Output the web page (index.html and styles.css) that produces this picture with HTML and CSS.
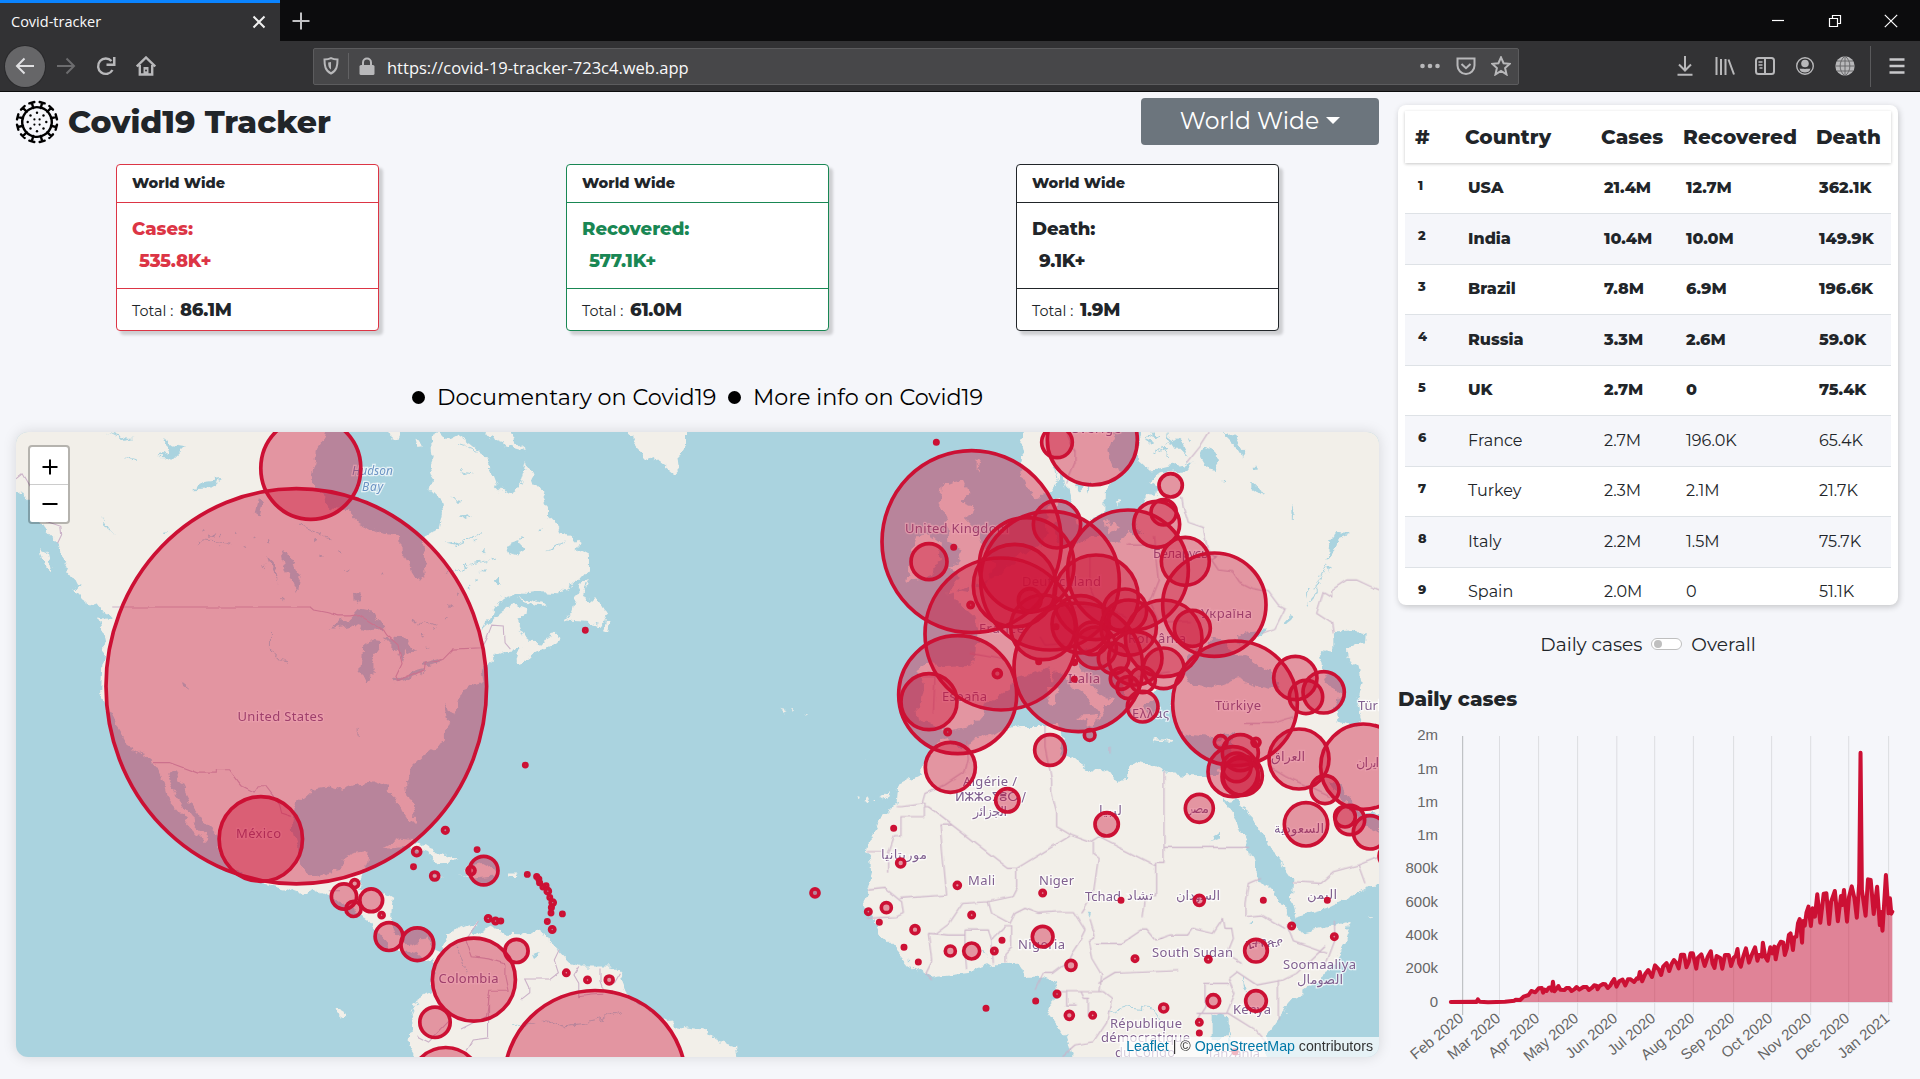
FILE: index.html
```html
<!DOCTYPE html>
<html lang="en">
<head>
<meta charset="utf-8">
<title>Covid-tracker</title>
<link rel="stylesheet" href="styles.css">
</head>
<body>
<div class="browser">
  <div class="tabstrip">
    <div class="tab"><span class="tab-title">Covid-tracker</span>
      <svg class="tab-close" viewBox="0 0 14 14"><path d="M1.5 1.5l11 11M12.5 1.5l-11 11"/></svg></div>
    <svg class="tab-new" viewBox="0 0 18 18"><path d="M9 0.500v17M.5 9h17"/></svg>
    <div class="winctl">
      <svg viewBox="0 0 14 14"><path d="M1 6.500h12"/></svg>
      <svg viewBox="0 0 14 14"><path d="M1.500 4.500h8v8h-8zM4.500 4.500v-3h8v8h-3"/></svg>
      <svg viewBox="0 0 14 14"><path d="M.8.8l12.400 12.400M13.200.8L.8 13.200"/></svg>
    </div>
  </div>
  <div class="toolbar">
    <div class="nav">
      <span class="back"><svg viewBox="0 0 20 20"><path d="M19 10H2M9.500 2.500L2 10l7.500 7.500"/></svg></span>
      <svg class="dim" viewBox="0 0 20 20"><path d="M1 10h17M10.500 2.500L18 10l-7.500 7.500"/></svg>
      <svg class="bold" viewBox="0 0 20 20"><path d="M16.500 14A7.700 7.700 0 1 1 15.500 5"/><path class="solid" d="M19.500 1v9h-9v-2.500h6.500V1z"/></svg>
      <svg class="bold" viewBox="0 0 20 20"><path d="M.8 10.500L10 1.500l9.200 9M3.800 9v9.500h12.400V9"/><path class="solid" d="M7.500 11h5v8h-5z"/><circle class="hole" cx="10" cy="14.500" r="1"/></svg>
    </div>
    <div class="urlbar">
      <svg class="shield" viewBox="0 0 16 18"><path d="M8 1.200c2 1 4 1.300 6.500 1.300 0 6-.5 11-6.500 14C2 13.500 1.500 8.500 1.500 2.500 4 2.500 6 2.200 8 1.200z"/><path d="M8 5v7.500C5.500 11 5.200 9 5.200 5.600z" class="solid"/></svg>
      <i class="bar-sep"></i>
      <svg class="lock" viewBox="0 0 16 18"><path d="M4 9V5.500a4 4 0 0 1 8 0V9"/><rect class="solid" x="0.500" y="8" width="15" height="10" rx="1.500"/></svg>
      <span class="url">https://covid-19-tracker-723c4.web.app</span>
      <div class="url-actions">
        <svg viewBox="0 0 20 20"><circle class="solid" cx="2.500" cy="10" r="2.300"/><circle class="solid" cx="10" cy="10" r="2.300"/><circle class="solid" cx="17.500" cy="10" r="2.300"/></svg>
        <svg viewBox="0 0 20 20"><path d="M1.500 2.500h17v7a8.500 8.500 0 0 1-17 0z"/><path d="M5.500 8l4.500 4.200L14.500 8"/></svg>
        <svg viewBox="0 0 20 20"><path d="M10 1.300l2.600 5.900 6.200.6-4.700 4.200 1.400 6.400L10 15l-5.500 3.400L5.900 12 1.200 7.800l6.200-.6z"/></svg>
      </div>
    </div>
    <div class="tools">
      <svg viewBox="0 0 20 20"><path d="M10 0v13.500M4 8.500l6 6 6-6M2.500 18.800h15"/></svg>
      <svg viewBox="0 0 20 20"><path d="M1.500 1v18M6 3v16M10.500 3v16M13.500 3.500L19 18.500"/></svg>
      <svg viewBox="0 0 20 20"><rect x="1" y="2" width="18" height="16" rx="2.500"/><path d="M10 2v16" /><path class="thin" d="M3.500 6h4M3.500 9h4M4.500 12h3"/></svg>
      <svg viewBox="0 0 20 20"><circle class="thin" cx="10" cy="10" r="8.300"/><circle class="solid" cx="10" cy="7.500" r="3.800"/><path class="solid" d="M4.500 12.500c2 .5 9 .5 11 0-.6 3-3 4-5.500 4s-5-1-5.500-4z"/></svg>
      <svg viewBox="0 0 20 20"><circle class="solid" cx="10" cy="10" r="9.700"/><path class="grid-line" d="M10 0v20M0 10h20M2 5h16M2 15h16M10 0C3.500 5 3.500 15 10 20M10 0c6.500 5 6.500 15 0 20"/></svg>
    </div>
    <i class="tool-sep"></i>
    <svg class="menu" viewBox="0 0 16 18"><path d="M.5 2.500h15M.5 9h15M.5 15.500h15"/></svg>
  </div>
</div>

<main class="app">
  <section class="left">
    <header class="head">
      <svg class="virus" viewBox="-22 -22 44 44">
        <g fill="none" stroke="#000" stroke-width="2.400" transform="rotate(15)">
          <circle r="14.800"/>
          <g id="spikes"><path id="sp" d="M0-14.500v-5.500M-2.600-20h5.200" stroke-linecap="round"/><use href="#sp" transform="rotate(30)"/><use href="#sp" transform="rotate(60)"/></g>
          <use href="#spikes" transform="rotate(90)"/><use href="#spikes" transform="rotate(180)"/><use href="#spikes" transform="rotate(270)"/>
        </g>
        <g fill="#000"><circle cx="0" cy="-9.300" r="1.200"/><circle cx="0" cy="9.300" r="1.200"/><circle cx="-9.300" cy="0" r="1.200"/><circle cx="9.300" cy="0" r="1.200"/><circle cx="-6.500" cy="-6.500" r="1.200"/><circle cx="6.500" cy="-6.500" r="1.200"/><circle cx="-6.500" cy="6.500" r="1.200"/><circle cx="6.500" cy="6.500" r="1.200"/><circle cx="-2.600" cy="-2.600" r="1.100"/><circle cx="2.600" cy="-2.600" r="1.100"/><circle cx="-2.600" cy="2.600" r="1.100"/><circle cx="2.600" cy="2.600" r="1.100"/></g>
      </svg>
      <h1>Covid19 Tracker</h1>
      <button class="dropdown"><span>World Wide</span><i class="caret"></i></button>
    </header>

    <div class="cards">
      <article class="card red"><h2>World Wide</h2><div class="card-body"><p>Cases:</p><p class="num">535.8K+</p></div><footer>Total : <b>86.1M</b></footer></article>
      <article class="card green"><h2>World Wide</h2><div class="card-body"><p>Recovered:</p><p class="num">577.1K+</p></div><footer>Total : <b>61.0M</b></footer></article>
      <article class="card dark"><h2>World Wide</h2><div class="card-body"><p>Death:</p><p class="num">9.1K+</p></div><footer>Total : <b>1.9M</b></footer></article>
    </div>

    <nav class="links"><i class="dot"></i><a class="l1">Documentary on Covid19</a><i class="dot"></i><a class="l2">More info on Covid19</a></nav>

    <div class="map">
      <svg class="world" viewBox="16 432 1363 625">
        <defs>
          <filter id="coast" filterUnits="userSpaceOnUse" x="0" y="400" width="1400" height="680"><feTurbulence type="fractalNoise" baseFrequency=".09" numOctaves="4" seed="4"/><feDisplacementMap in="SourceGraphic" scale="11" xChannelSelector="R" yChannelSelector="G"/></filter>
          <filter id="frontier" filterUnits="userSpaceOnUse" x="0" y="400" width="1400" height="680"><feTurbulence type="fractalNoise" baseFrequency=".06" numOctaves="2" seed="9"/><feDisplacementMap in="SourceGraphic" scale="4" xChannelSelector="R" yChannelSelector="G"/></filter>
        </defs>
        <g filter="url(#coast)">
        <g class="land" transform="translate(0 420) scale(.40816 .42034)">
          <path d="M20 0H805L790 45 775 70 765 120 770 160 800 190 805 210 850 215 880 245 930 268 980 278 982 310 1003 345 1012 372 1025 385 1045 360 1040 315 1035 290 1045 275 1075 255 1083 220 1075 190 1050 165 1060 130 1052 110 1060 90 1055 40 1075 32 1100 45 1120 35 1150 55 1175 75 1200 90 1198 115 1205 130 1215 155 1230 170 1245 178 1262 168 1272 155 1280 130 1288 100 1300 125 1310 150 1322 160 1330 180 1345 210 1345 230 1362 245 1380 270 1400 278 1420 295 1415 305 1443 320 1443 355 1420 380 1400 395 1375 412 1330 410 1300 414 1250 412 1230 425 1215 440 1195 475 1182 500 1200 485 1220 462 1245 446 1270 440 1292 448 1290 462 1265 475 1275 498 1282 515 1300 530 1330 532 1350 505 1360 503 1360 515 1371 520 1350 540 1320 550 1300 560 1275 578 1263 570 1268 555 1285 545 1270 545 1240 548 1215 558 1192 575 1185 600 1190 625 1155 635 1130 645 1125 670 1112 705 1088 670 1098 715 1090 735 1090 765 1050 790 1025 810 1005 830 997 860 1000 890 1018 930 1016 955 1002 955 985 930 970 895 945 872 905 858 870 862 850 870 840 882 800 872 765 878 720 915 715 980 735 1040 740 1065 770 1085 820 1072 838 1060 845 1040 870 1030 903 1025 900 1050 885 1085 875 1118 900 1115 935 1122 965 1140 962 1165 960 1200 975 1235 1000 1250 1030 1240 1050 1238 1062 1255 1080 1262 1100 1220 1130 1207 1172 1190 1155 1212 1165 1225 1200 1205 1240 1222 1290 1224 1320 1215 1345 1230 1342 1240 1370 1260 1400 1290 1430 1300 1500 1300 1520 1320 1530 1345 1540 1380 1633 1425 1650 1440 1723 1450 1764 1480 1801 1490 1808 1550H1040L1003 1490 1005 1460 1015 1440 1005 1410 1020 1380 1055 1360 1065 1320 1062 1280 1040 1285 1020 1270 985 1262 960 1265 945 1240 930 1225 900 1190 860 1160 820 1140 770 1118 740 1130 700 1115 640 1100 590 1080 560 1062 540 1030 535 990 500 960 460 900 440 862 430 838 415 838 418 860 440 905 480 960 508 990 500 1000 470 970 430 925 412 905 400 860 375 815 350 795 315 775 285 725 268 690 248 650 250 590 258 540 250 500 243 465 275 470 250 448 215 430 190 395 180 375 150 330 140 290 115 265 95 240 80 200 60 180 39 165 20 140Z"/>
          <path d="M180 400L215 405 245 430 275 462 240 448 205 425ZM98 305L120 315 132 362 105 335ZM1445 380L1425 390 1410 420 1400 455 1385 477 1440 480 1465 485 1460 492 1485 478 1480 498 1492 502 1497 480 1485 478 1480 462 1488 455 1475 435 1440 430 1430 415ZM1265 423l35 5 40 12-20 4zM940 1018L975 998 1020 1003 1050 1022 1090 1035 1122 1050 1072 1052 1050 1030 1000 1012ZM1118 1080l32 6-6-28 35-5 35 18 8 14-60 6zM1246 1081h24l2 6h-26zM1050 1085l25-1 12 5-15 4zM1175 14h70l20 40 25 18-30-8-40-14-25-10zM950 18h35l-10 24-20 5zM1015 40l15 5 0 22-10-8zM820 1398l12 4 14 8-8 10-16-10z"/>
        </g>
        <g class="water" transform="translate(0 420) scale(.40816 .42034)">
          <path d="M690 310L715 325 722 355 735 380 730 410 718 380 700 355ZM810 500L835 480 855 475 880 448 915 455 925 475 942 497 900 500 860 488ZM890 535L915 525 935 528 912 560 913 610 895 622 885 600ZM940 515L990 520 1003 540 1022 553 1005 555 990 548 985 575 975 550 960 535ZM965 620L1010 600 1042 592 1030 605 975 626ZM1035 578L1085 566 1075 580 1040 586ZM385 88L415 78 400 42 425 60 455 65 430 90ZM470 165L500 145 545 140 505 163ZM265 30l40 12 25 0-30 5zM245 225l20 30 20 20-25-20zM395 265l20 0-15 5zM305 88l30 8 0 5zM632 190l12 8-8 32-12-8zM445 622l16 12 2 10-12-8zM867 412h14v20h-12zM655 325l15 15 12 45-15-25zM1240 300l30-10 10 15-15 20-15-5zM1110 185l25 5-15 2zM1120 230l35-5-25 10zM1210 375l12-2 2 14-10 2zM1385 285l-45 25 20-5zM1090 292l45-4-20 8zM1305 1270l20-5-5 18-10-2z"/>
          <path d="M495 260l8 4-6 4zM515 275l10-3-4 8zM540 270l6 6-8 2zM560 290l8 2-6 5zM580 262l5 6-7 1zM535 300l6 2-5 4zM600 300l6-3 0 6zM625 275l8 3-6 4zM655 290l6-4 2 8zM645 340l8 3-6 5zM690 420l8 5-6 4zM765 285l12 3-8 5zM785 320l8 4-8 3zM830 318l8-3-2 8zM850 355l10-2-6 7zM930 360l8 3-8 4zM1010 480l12-4-6 8zM1030 510l10-5-6 9zM1060 495l8 3-8 4zM1045 540l10-2-6 5zM1100 440l8-3-4 8zM1090 470l8 3-8 4zM1160 290l10-3-6 7zM1185 310l8-3-2 8zM1200 330l10 2-6 4zM1165 380l6 4-6 4zM1275 280l8 6-8 4zM1180 355l8-3-4 7zM1320 255l8 3-8 3zM1145 400l6-6 2 8zM1120 415l6 3-6 3z"/>
          <path class="river" d="M665 505v40l32 42M480 300l20-15 60 5M880 730v20M1020 490l20-12 25 10M730 250l80 30M1115 300l70-30M1150 345l70-12M1130 120l30 6M1125 60l40 12M1095 370l50-25M1330 1430l50 12 80-10 60-24M1120 1250l20 60M1250 1440l60 0"/>
        </g>
        <g class="land" transform="translate(400 420) scale(.33333 .42034)">
          <path d="M685 10L700 55 735 97 760 90 800 112 825 128 842 112 838 80 858 60 858 10ZM1145 688l15 2-10 4zM1170 686l12 0-8 3zM1206 706l16 2-8 2zM1390 811h12l-4 4zM1372 890l8 2-4 10zM1398 900l12 2-8 8zM1420 904h10l-6 5zM1450 902l20-20-6 18z"/>
        </g>
        <g transform="translate(860 420) scale(.33333)">
          <g class="land">
            <path d="M497 10L482 80 492 120 480 160 500 210 530 235 570 215 600 170 612 160 620 200 635 250 650 310 690 315 700 290 733 275 735 200 778 175 790 150 755 130 745 90 775 10Z"/>
            <path d="M845 10L832 70 835 120 865 148 900 146 970 130 1000 135 975 150 900 160 868 185 895 205 890 230 860 228 848 245 850 270 830 290 840 320 852 345 800 345 780 372 740 355 700 345 650 372 605 375 585 340 590 270 612 235 590 235 555 270 560 340 540 380 480 400 440 450 400 475 360 505 330 490 330 520 280 512 285 540 340 590 352 640 350 700 338 737 250 742 210 728 183 738 175 760 192 800 175 870 182 902 230 918 260 937 335 918 370 880 380 850 430 820 460 795 465 770 520 755 570 742 600 755 640 800 690 840 720 878 703 905 715 903 735 868 728 852 762 852 765 845 700 805 670 760 650 710 655 685 690 680 700 700 745 745 795 790 800 850 825 900 850 905 860 870 845 855 880 845 880 815 945 800 935 850 947 905 965 940 1000 945 1070 955 1100 935 1130 940 1115 985 1095 1020 1075 1065 1040 1065 985 1066 915 1057 880 1035 830 1020 805 1040 800 1080 780 1082 740 1055 690 1050 650 1025 620 1012 600 1000 612 950 600 915 540 915 480 915 400 940 340 965 305 985 255 955 235 975 190 1030 185 1060 115 1095 110 1150 60 1200 25 1270 20 1290 32 1310 38 1370 10 1450 40 1500 60 1540 100 1580 160 1650 215 1670 330 1655 400 1630 470 1628 500 1670 545 1670 580 1680 592 1720 567 1780 620 1850 650 1945H1215L1225 1840 1260 1790 1320 1720 1400 1660 1450 1580 1470 1508 1330 1540 1295 1500 1250 1430 1200 1380 1165 1280 1130 1195 1090 1130 1112 1145 1135 1140 1190 1220 1250 1310 1300 1380 1295 1440 1310 1490 1400 1465 1480 1425 1520 1400 1600 1392V10Z"/>
            <path d="M250 190L310 178 325 215 300 245 340 260 318 300 360 345 380 410 402 440 388 480 330 500 262 520 300 470 268 450 305 420 300 380 268 365 265 310 240 260ZM170 350L205 340 240 365 236 420 215 470 142 485 150 420ZM648 888l58-5-8 35zM565 795l25 0-6 56-18 4zM572 742l10 4-2 36-8-6zM880 953l20 5 38 2-5 6-50-5zM1058 968l45-15-20 22zM735 310l30-5 5 25-30 10zM350 122l10 0-10 34zM772 240l14 4-14 22zM10 1140l20-8-10 14zM55 1128l20-12 15 0-20 20zM1520 1495h16l-8 3z"/>
          </g>
          <g class="water">
            <path d="M985 700L972 760 985 785 1060 800 1130 775 1180 798 1235 806 1260 800 1240 765 1200 740 1150 705 1110 695 1095 660 1060 655 1035 690ZM1120 655L1160 635 1215 628 1200 650 1150 672ZM1420 655L1445 630 1480 627 1517 638 1515 670 1458 680 1460 715 1495 735 1505 790 1490 850 1510 900 1480 915 1430 905 1422 870 1440 830 1400 780 1378 700 1395 685 1420 690ZM1400 1080L1440 1090 1480 1155 1500 1180 1560 1185V1235L1500 1200 1430 1120ZM1035 80L1060 90 1080 120 1070 150 1040 145 1020 110ZM1100 36l30 20 25 50-15 5-25-40-20-20zM1175 140h15v12h-14zM1168 180l40 40-5 8-35-25zM1090 185h8v10zM920 36l40 30 20 45-30-30zM1405 370l25-35 40 5-35 15-10 30-25 30zM1405 440h10l-5 20zM1275 605l20-20 5 10-20 15zM1295 260l10 20-5 10zM1338 500l5 0-4 40zM1058 1780l45 15 0 35-20 30-25 0zM1145 1665l10 30 8 20-14-10zM1040 1285l15-30 25-20 0 20-30 10zM375 1590l8 20-15-15zM680 1475h10l-3 12zM1165 1505l12-4-2 12zM1100 1820l20 60-10 5zM860 60l20 8-10 10zM900 80l25 10-15 8zM880 40l20 5-12 8zM990 50l12 15-8 4zM650 180l15 10-5 25-10-15zM680 190l10 5-4 20z"/>
            <path class="river" d="M880 100l60-40M1345 560l60-130M1300 260v40M740 1780l60-20 80 10 20 30M600 200l-20-60M1120 60l-30-30M860 60l40-20M890 90l40 20"/>
          </g>
        </g>
        </g>
        <g filter="url(#frontier)">
        <g class="border" transform="translate(0 420) scale(.40816 .42034)">
          <path d="M275 445H760L768 452 800 458 830 466 858 466 878 463 940 500 948 512 975 535 985 580 970 610 975 620 1040 592 1042 576 1085 570 1110 545 1180 542 1192 520 1205 488 1233 490 1235 530 1248 545M375 815H415L485 840H530V832H560L590 870 620 885 630 870H650L685 915 690 935 715 943M39 140l15-12 30 50 20 60 45 15 2 20-10 20M808 1120h25M1172 1192l-30 45 15 40 40 5 40 12v30l8 35-45 0-8 60-60 30M1370 1260l-12 25 10 30-20 15-60 0 10 20 0 15-20 15M1418 1300l-12 20 12 20 0 32 30-4 30-2M1470 1305l0 30 10 25M1505 1340l15-25M1197 1370l0 100-40 5-15 25M1020 1465l30 15 50-50"/>
        </g>
        <g class="border" transform="translate(860 420) scale(.33333)">
            <path d="M1048 36L1020 80 980 130M645 90l0 40-25 60M620 36l25 60M965 230l5 30 15 50 45 15 12 60 25 30M800 375l80 0M880 345l5 45 10 90-20 50-20 30M1040 400l30 10-15 10 20 30 40 5 20 30 40 20 50 10 30 40 20 10-30 60-40 15M1420 640l-5-30-45-30 20-65 25 15 0-20 45-30h30l65 30M750 1000l0-20M555 920l0 60 20 100 0 40 15 60 0 40 45 26 55 20 25-15 170 85M185 1155l10-35 60-25 60-40 10-40-5-50M205 1160L445 1345 470 1345 630 1248M205 1160h-10v-10l-70 10-15 0M193 1160v30h-70v60h-20l-20 60v45M20 1295h45M275 1215h-35l20 210-140 10M470 1345l0 55-15 30-70 15-80 5-40 60-40 30M25 1410l50-5 50 40 5 35-20 10-90 5M912 1055v227M912 1282h255M912 1282v45h-25v100h-30l-8 65M700 1265l0 40 15 10-15 105-25 45-10 15M385 1445l10 35 55 30 15-30 30-15 40 15 60-5 45 0 35 55-20 40-20 30-15 30-40 30-30 0-25 50M315 1530l70 0 10 30 5 70M315 1530v60l5 60M205 1540l60 5 50 0M205 1540l10 80-20 40 20 20M395 1560l40-40 20 0 0 60-20 20v30M690 1500l15 50-20 15 10 50 30 50-5 50M705 1570l80 0 60-40 15 0 25 30 45-15 50 0 15-20 65 15 30-45 5 30 20 0 5 30-20 50 45 25M715 1690l50-30 190-8M1105 1675l25-20 60 40 80-15 40-20 85-80M1105 1675l20 45-25 60M1255 1800l0-120M1395 1640l30-80-2-55M1400 1600l-100-35-20-50M1200 1375l-35 15-10 60 0 40 50-5 70 40M590 1715h140l25 20-15 70-40 60-55 10-40 35M620 1715v40l30 0M660 1715l10 20 15 0 0 55M1010 1800l25-40 0-70 70 0M1010 1780h95l80 50 45 50M1300 1385l80 5 40-35 75-20 65-25M1495 1335l20 55M1230 1040l50 30 130 60M1150 910l90 0 60-20M440 720l-110-20M185 770h40l-5 110M540 650l15 25 60-5M690 410v90l25 50M640 560l90 0 70 30M870 545l30 60 90 0M830 770l100-15"/>
        </g>
        </g>
        <g class="label">
          <text x="352" y="475" textLength="41" class="sea">Hudson</text><text x="362" y="490.500" textLength="21" class="sea">Bay</text>
          <text x="237.500" y="721" textLength="86">United States</text>
          <text x="236" y="838" textLength="45">México</text>
          <text x="438.500" y="982.500" textLength="60">Colombia</text>
          <text x="905" y="532.500" textLength="104">United Kingdom</text>
          <text x="1072" y="432.500" textLength="49">Sverige</text>
          <text x="1022" y="586" textLength="79">Deutschland</text>
          <text x="979" y="633" textLength="45">France</text>
          <text x="942" y="701" textLength="45">España</text>
          <text x="1068" y="683" textLength="32">Italia</text>
          <text x="1132" y="718" textLength="37">Ελλάς</text>
          <text x="1153" y="557.500" textLength="55">Беларусь</text>
          <text x="1201" y="617.500" textLength="51">Україна</text>
          <text x="1128" y="643" textLength="58">România</text>
          <text x="1215" y="710" textLength="46">Türkiye</text>
          <text x="1358" y="710">Türkmenistan</text>
          <text x="963" y="785.500" textLength="54">Algérie /</text>
          <text x="955" y="801" textLength="71" class="tif">ⵍⵣⵣⴰⵢⴻⵔ /</text>
          <text x="973" y="816" textLength="34">الجزائر</text>
          <text x="1099" y="815" textLength="23">ليبيا</text>
          <text x="1187" y="813" textLength="22">مصر</text>
          <text x="1274" y="833" textLength="50">السعودية</text>
          <text x="1271" y="761" textLength="34">العراق</text>
          <text x="1356" y="767" textLength="23">ایران</text>
          <text x="881" y="859" textLength="46">موريتانيا</text>
          <text x="968" y="884.500" textLength="27">Mali</text>
          <text x="1039" y="885" textLength="35">Niger</text>
          <text x="1085" y="900.500" textLength="36">Tchad</text><text x="1127" y="900" textLength="26">تشاد</text>
          <text x="1176" y="900" textLength="44">السودان</text>
          <text x="1307" y="899" textLength="30">اليمن</text>
          <text x="1018" y="949" textLength="47">Nigeria</text>
          <text x="1152" y="957" textLength="81">South Sudan</text>
          <text x="1244" y="947" textLength="39">ኢትዮጵያ</text>
          <text x="1283" y="968.500" textLength="73">Soomaaliya</text><text x="1297" y="983.500" textLength="46">الصومال</text>
          <text x="1233" y="1014" textLength="38">Kenya</text>
          <text x="1110" y="1027.500" textLength="72">République</text><text x="1101" y="1042" textLength="89">démocratique</text><text x="1115" y="1057" textLength="60">du Congo</text>
          <text x="1207" y="1058" textLength="53">Tanzania</text>
        </g>
        <g class="cases">
          <ellipse cx="296.300" cy="686.300" rx="190.300" ry="197.600"/><ellipse cx="310.800" cy="468.300" rx="50" ry="51"/><ellipse cx="260.800" cy="839" rx="41.700" ry="42.400"/>
          <circle cx="344" cy="896.500" r="12.600"/><circle cx="354.700" cy="883.600" r="4"/><circle cx="371.200" cy="900.300" r="11.400"/><circle cx="353.500" cy="908.900" r="7.600"/><circle cx="381.600" cy="915.200" r="2.500"/><circle cx="389" cy="936.600" r="13.900"/><circle cx="417.300" cy="944.200" r="16.400"/>
          <circle cx="416.700" cy="851.700" r="4"/><circle cx="413.500" cy="866.800" r="1.600"/><circle cx="434.700" cy="876" r="4"/><circle cx="445.300" cy="830.300" r="2.800"/><circle cx="477.100" cy="849.600" r="1.600"/><circle cx="471" cy="870.600" r="4"/><circle cx="483.700" cy="870.600" r="14.300"/><circle cx="527.300" cy="874.400" r="1.600"/>
          <circle cx="536.700" cy="876.500" r="1.700"/><circle cx="538.800" cy="879" r="1.700"/><circle cx="539.600" cy="882.800" r="1.700"/><circle cx="542.900" cy="887" r="1.600"/><circle cx="546.100" cy="885.700" r="1.600"/><circle cx="547.800" cy="891.200" r="2.500"/><circle cx="549.800" cy="897.500" r="1.600"/><circle cx="552.700" cy="902.600" r="2.500"/><circle cx="551.400" cy="907.600" r="1.700"/><circle cx="551" cy="913" r="1.600"/><circle cx="547.300" cy="921.500" r="1.600"/><circle cx="552.200" cy="929.500" r="2.600"/><circle cx="562.400" cy="913.900" r="1.600"/>
          <circle cx="488.200" cy="918.500" r="2.600"/><circle cx="495.500" cy="921" r="2.600"/><circle cx="500.800" cy="921" r="1.600"/><circle cx="525.300" cy="765.100" r="1.600"/><circle cx="585.300" cy="630.200" r="1.600"/>
          <circle cx="473.900" cy="979.700" r="41.500"/><circle cx="516.500" cy="950.900" r="11.600"/><circle cx="566.300" cy="972.800" r="2.600"/><circle cx="587.500" cy="979.900" r="2.600"/><circle cx="609.200" cy="979.900" r="3.900"/><circle cx="435" cy="1022.300" r="15.200"/><circle cx="445.700" cy="1082.500" r="35"/><circle cx="595" cy="1081.500" r="91"/><circle cx="815" cy="892.900" r="4"/>
          <g class="z" transform="translate(860 420) scale(.33333)">
            <circle cx="229" cy="67" r="5"/><circle cx="697" cy="60" r="135"/><circle cx="591" cy="67" r="46"/><ellipse cx="335" cy="365" rx="269" ry="273"/><circle cx="207" cy="425" r="54"/><circle cx="281" cy="382" r="5"/><circle cx="932" cy="196" r="35"/><circle cx="911" cy="277" r="38"/><circle cx="890" cy="313" r="69"/><circle cx="591" cy="313" r="71"/>
            <circle cx="570" cy="482" r="208"/><circle cx="500" cy="435" r="142"/><circle cx="464" cy="497" r="124"/><circle cx="804" cy="451" r="181"/><circle cx="708" cy="532" r="127"/><circle cx="976" cy="424" r="72"/><circle cx="1063" cy="554" r="155"/><circle cx="423" cy="642" r="228"/><circle cx="549" cy="622" r="97"/><circle cx="509" cy="540" r="34"/><circle cx="662" cy="613" r="86"/>
            <circle cx="655" cy="742" r="193"/><circle cx="697" cy="655" r="49"/><circle cx="707" cy="683" r="62"/><circle cx="795" cy="572" r="65"/><circle cx="806" cy="623" r="83"/><circle cx="911" cy="655" r="115"/><circle cx="997" cy="625" r="54"/><circle cx="826" cy="715" r="80"/><circle cx="761" cy="715" r="46"/><circle cx="911" cy="745" r="61"/><circle cx="783" cy="776" r="32"/><circle cx="848" cy="780" r="38"/><circle cx="804" cy="803" r="33"/><circle cx="848" cy="860" r="46"/>
            <circle cx="293" cy="824" r="177"/><circle cx="207" cy="845" r="84"/><circle cx="412" cy="761" r="12"/><circle cx="332" cy="555" r="8"/><circle cx="263" cy="936" r="8"/><circle cx="643" cy="727" r="6"/><circle cx="643" cy="778" r="5"/><circle cx="536" cy="725" r="5"/><circle cx="588" cy="620" r="5"/><circle cx="689" cy="945" r="16"/><circle cx="570" cy="990" r="46"/>
            <circle cx="1125" cy="850" r="187"/><circle cx="1306" cy="774" r="65"/><circle cx="1338" cy="831" r="50"/><circle cx="1391" cy="817" r="62"/><circle cx="1082" cy="966" r="19"/><circle cx="1188" cy="967" r="12"/><circle cx="1141" cy="998" r="54"/><circle cx="1317" cy="1017" r="90"/><circle cx="1510" cy="1040" r="128"/><circle cx="1119" cy="1055" r="75"/><circle cx="1148" cy="1067" r="59"/><circle cx="1141" cy="1070" r="55"/><circle cx="1130" cy="1042" r="43"/>
            <circle cx="271" cy="1042" r="75"/><circle cx="442" cy="1141" r="35"/><circle cx="740" cy="1213" r="35"/><circle cx="1018" cy="1165" r="42"/><circle cx="1338" cy="1213" r="65"/><circle cx="1395" cy="1109" r="42"/><circle cx="1455" cy="1190" r="31"/><circle cx="1470" cy="1200" r="44"/><circle cx="1530" cy="1237" r="50"/><circle cx="1593" cy="1308" r="36"/>
            <circle cx="101" cy="1225" r="5"/><circle cx="122" cy="1329" r="12"/><circle cx="292" cy="1396" r="9"/><circle cx="548" cy="1419" r="8"/><circle cx="783" cy="1441" r="5"/><circle cx="1018" cy="1441" r="15"/><circle cx="1210" cy="1441" r="5"/><circle cx="1402" cy="1441" r="5"/><circle cx="79" cy="1463" r="15"/><circle cx="25" cy="1475" r="8"/><circle cx="58" cy="1507" r="5"/><circle cx="165" cy="1529" r="12"/><circle cx="132" cy="1582" r="5"/><circle cx="175" cy="1626" r="5"/><circle cx="335" cy="1485" r="8"/><circle cx="271" cy="1593" r="15"/><circle cx="335" cy="1593" r="24"/><circle cx="403" cy="1593" r="8"/><circle cx="426" cy="1561" r="5"/><circle cx="548" cy="1550" r="31"/><circle cx="633" cy="1636" r="15"/><circle cx="825" cy="1616" r="8"/><circle cx="1045" cy="1618" r="8"/><circle cx="1188" cy="1592" r="34"/><circle cx="1295" cy="1518" r="8"/><circle cx="1423" cy="1550" r="8"/><circle cx="591" cy="1722" r="8"/><circle cx="527" cy="1743" r="5"/><circle cx="378" cy="1765" r="5"/><circle cx="628" cy="1786" r="12"/><circle cx="698" cy="1786" r="8"/><circle cx="911" cy="1764" r="12"/><circle cx="1060" cy="1743" r="19"/><circle cx="1188" cy="1743" r="31"/><circle cx="1018" cy="1807" r="8"/><circle cx="1018" cy="1839" r="5"/><circle cx="1125" cy="1895" r="5"/>
          </g>
        </g>
      </svg>
      <div class="zoomctl"><span><svg viewBox="0 0 16 16"><path d="M8 0.500v15M.5 8h15"/></svg></span><span><svg viewBox="0 0 16 16"><path d="M.5 8h15"/></svg></span></div>
      <div class="attrib"><a>Leaflet</a> | © <a>OpenStreetMap</a> contributors</div>
    </div>
  </section>

  <aside class="right">
    <div class="table-card">
      <table>
        <colgroup><col class="c0"><col class="c1"><col class="c2"><col class="c3"><col class="c4"></colgroup>
        <thead><tr><th>#</th><th>Country</th><th>Cases</th><th>Recovered</th><th>Death</th></tr></thead>
        <tbody>
          <tr class="top"><th>1</th><td>USA</td><td>21.4M</td><td>12.7M</td><td>362.1K</td></tr>
          <tr class="top"><th>2</th><td>India</td><td>10.4M</td><td>10.0M</td><td>149.9K</td></tr>
          <tr class="top"><th>3</th><td>Brazil</td><td>7.8M</td><td>6.9M</td><td>196.6K</td></tr>
          <tr class="top"><th>4</th><td>Russia</td><td>3.3M</td><td>2.6M</td><td>59.0K</td></tr>
          <tr class="top"><th>5</th><td>UK</td><td>2.7M</td><td>0</td><td>75.4K</td></tr>
          <tr><th>6</th><td>France</td><td>2.7M</td><td>196.0K</td><td>65.4K</td></tr>
          <tr><th>7</th><td>Turkey</td><td>2.3M</td><td>2.1M</td><td>21.7K</td></tr>
          <tr><th>8</th><td>Italy</td><td>2.2M</td><td>1.5M</td><td>75.7K</td></tr>
          <tr><th>9</th><td>Spain</td><td>2.0M</td><td>0</td><td>51.1K</td></tr>
        </tbody>
      </table>
    </div>
    <div class="switch-row"><span>Daily cases</span><i class="switch"></i><span>Overall</span></div>
    <h3>Daily cases</h3>
    <svg class="chart" viewBox="1390 715 530 364">
      <g transform="translate(1390 690) scale(.33803 .33333)">
        <path class="grid0" d="M215 138V975"/>
        <path class="gridv" d="M324 138V975M439.500 138V975M555 138V975M671 138V975M783 138V975M897.500 138V975M1016.500 138V975M1129 138V975M1244.500 138V975M1357 138V975M1475 138V975M180 937H1488"/>
        <path class="area" d="M180 936L250 935 256 936 260 928 265 935 290 937 340 935 368 932 372 929 385 930 395 920 410 915 418 903 430 907 440 895 449 894 453 908 458 899 463 903 470 893 476 892 479 902 482 875 486 904 492 897 498 888 504 899 516 900 522 894 530 894 537 903 545 898 552 891 560 899 572 891 582 891 588 900 598 893 604 886 611 887 614 898 620 888 630 882 637 883 644 894 652 886 657 876 663 867 670 890 678 874 688 869 696 886 704 868 712 868 722 876 730 865 735 866 739 846 746 874 755 852 764 840 775 861 784 826 795 838 802 855 808 830 818 819 826 843 833 822 840 810 848 820 854 835 861 794 870 794 877 832 884 815 889 790 896 790 906 836 911 803 921 793 931 828 940 800 949 784 954 820 960 834 966 798 977 804 983 836 991 795 1002 795 1009 828 1017 803 1023 798 1028 777 1033 820 1038 830 1045 800 1053 775 1062 818 1070 795 1080 772 1087 812 1092 795 1100 800 1103 758 1110 800 1117 812 1125 772 1131 790 1137 770 1141 808 1148 770 1156 755 1163 757 1168 795 1174 775 1180 735 1185 730 1192 780 1196 742 1202 740 1207 700 1212 687 1219 758 1222 693 1227 707 1232 668 1238 650 1245 708 1250 655 1257 680 1264 613 1273 698 1283 611 1291 610 1299 702 1305 635 1316 603 1325 694 1334 618 1338 645 1343 600 1352 695 1358 620 1366 589 1374 625 1381 683 1388 580 1392 188 1396 600 1407 677 1414 568 1422 570 1431 672 1441 590 1449 705 1451 665 1457 722 1467 555 1475 670 1479 625 1483 671 1486 665V936Z"/>
        <path class="line" d="M180 936L250 935 256 936 260 928 265 935 290 937 340 935 368 932 372 929 385 930 395 920 410 915 418 903 430 907 440 895 449 894 453 908 458 899 463 903 470 893 476 892 479 902 482 875 486 904 492 897 498 888 504 899 516 900 522 894 530 894 537 903 545 898 552 891 560 899 572 891 582 891 588 900 598 893 604 886 611 887 614 898 620 888 630 882 637 883 644 894 652 886 657 876 663 867 670 890 678 874 688 869 696 886 704 868 712 868 722 876 730 865 735 866 739 846 746 874 755 852 764 840 775 861 784 826 795 838 802 855 808 830 818 819 826 843 833 822 840 810 848 820 854 835 861 794 870 794 877 832 884 815 889 790 896 790 906 836 911 803 921 793 931 828 940 800 949 784 954 820 960 834 966 798 977 804 983 836 991 795 1002 795 1009 828 1017 803 1023 798 1028 777 1033 820 1038 830 1045 800 1053 775 1062 818 1070 795 1080 772 1087 812 1092 795 1100 800 1103 758 1110 800 1117 812 1125 772 1131 790 1137 770 1141 808 1148 770 1156 755 1163 757 1168 795 1174 775 1180 735 1185 730 1192 780 1196 742 1202 740 1207 700 1212 687 1219 758 1222 693 1227 707 1232 668 1238 650 1245 708 1250 655 1257 680 1264 613 1273 698 1283 611 1291 610 1299 702 1305 635 1316 603 1325 694 1334 618 1338 645 1343 600 1352 695 1358 620 1366 589 1374 625 1381 683 1388 580 1392 188 1396 600 1407 677 1414 568 1422 570 1431 672 1441 590 1449 705 1451 665 1457 722 1467 555 1475 670 1479 625 1483 671 1486 665"/>
      </g>
      <g class="ylab"><text x="1438" y="740.300">2m</text><text x="1438" y="774">1m</text><text x="1438" y="807">1m</text><text x="1438" y="840">1m</text><text x="1438" y="873">800k</text><text x="1438" y="907">600k</text><text x="1438" y="940">400k</text><text x="1438" y="973">200k</text><text x="1438" y="1007">0</text></g>
      <g class="ylab">
        <text transform="translate(1464.500 1020) rotate(-39.500)">Feb 2020</text><text transform="translate(1501.500 1020) rotate(-39.500)">Mar 2020</text><text transform="translate(1540.500 1020) rotate(-39.500)">Apr 2020</text><text transform="translate(1579.500 1020) rotate(-39.500)">May 2020</text><text transform="translate(1618.500 1020) rotate(-39.500)">Jun 2020</text><text transform="translate(1656.500 1020) rotate(-39.500)">Jul 2020</text><text transform="translate(1695.500 1020) rotate(-39.500)">Aug 2020</text><text transform="translate(1735.500 1020) rotate(-39.500)">Sep 2020</text><text transform="translate(1773.500 1020) rotate(-39.500)">Oct 2020</text><text transform="translate(1812.500 1020) rotate(-39.500)">Nov 2020</text><text transform="translate(1850.500 1020) rotate(-39.500)">Dec 2020</text><text transform="translate(1890.500 1020) rotate(-39.500)">Jan 2021</text>
      </g>
    </svg>
  </aside>
</main>
</body>
</html>
```
FILE: styles.css
```css
* { box-sizing: border-box; }
body { margin: 0; width: 1920px; height: 1079px; overflow: hidden; background: #f5f6fa; color: #212529; font-family: Montserrat, Inter, "Open Sans", sans-serif; }
h1, h2, h3, p { margin: 0; }
svg { display: block; }

/* browser chrome */
.browser { font-family: "Open Sans", "Noto Sans", sans-serif; color: #f9f9fa; }
.browser svg { fill: none; stroke: #b8b8ba; stroke-width: 2; width: 20px; height: 20px; flex: none; }
.browser svg .solid { fill: #b8b8ba; stroke: none; }
.browser svg .hole { fill: #323234; stroke: none; }
.browser svg .thin { stroke-width: 1.4; }
.browser svg .grid-line { stroke: #626264; stroke-width: .9; }
.browser .bold { stroke-width: 2.4; }
.tabstrip { display: flex; align-items: center; height: 41px; background: #0c0c0d; }
.tab { display: flex; align-items: center; justify-content: space-between; width: 280px; height: 41px; padding: 0 14px 0 11px; background: #323234; border-top: 3px solid #0a84ff; }
.tab-title { margin-top: -2px; font-size: 14.5px; }
.browser .tab-close { width: 14px; height: 14px; stroke: #f0f0f0; }
.browser .tab-new { width: 18px; height: 18px; margin-left: 12px; stroke: #c2c2c4; }
.winctl { display: flex; gap: 42.5px; margin-left: auto; padding-right: 22px; }
.browser .winctl svg { width: 14px; height: 14px; stroke: #fff; stroke-width: 1.2; }
.toolbar { display: flex; align-items: center; height: 51px; background: #323234; border-bottom: 1px solid #0c0c0d; padding-left: 5px; }
.nav { display: flex; align-items: center; gap: 20px; width: 308px; }
.back { display: flex; align-items: center; justify-content: center; width: 40px; height: 41px; border-radius: 50%; background: #666668; box-shadow: 0 0 0 1px #2a2a2c; margin-right: -9px; }
.browser .back svg { stroke: #e0e0e2; }
.browser .dim { stroke: #6c6c6e; }
.urlbar { display: flex; align-items: center; width: 1206px; height: 37px; padding: 0 7px 0 9px; background: #474749; border: 1px solid #5c5c5e; border-radius: 2px; }
.browser .shield { width: 16px; height: 18px; }
.bar-sep { width: 1px; height: 26px; background: #626264; margin: 0 10px 0 9px; }
.browser .lock { width: 16px; height: 18px; }
.url { margin: 2px 0 0 12px; font-size: 16.5px; }
.url-actions { display: flex; gap: 15.500px; margin-left: auto; }
.tools { display: flex; gap: 20px; margin-left: 156px; }
.tool-sep { width: 1px; height: 41px; background: #5a5a5c; margin-left: 15px; }
.browser .menu { width: 16px; height: 18px; margin-left: 18px; stroke: #c8c8ca; stroke-width: 2.4; }

/* page */
.app { display: flex; padding: 6px 22px 0 16px; gap: 19px; }
.left { width: 1363px; }
.head { display: flex; align-items: center; height: 48px; }
.virus { width: 44px; height: 44px; margin-left: -1px; }
h1 { margin-left: 9px; font-size: 31.500px; line-height: 40px; font-weight: 800; }
.dropdown { display: flex; align-items: center; justify-content: center; gap: 7px; width: 238px; height: 47px; margin: 0 0 1px auto; padding: 0 0 2px; border: 0; border-radius: 4px; background: #6c757d; color: #fff; font: 400 23.500px Montserrat, Inter, sans-serif; }
.caret { border: 7px solid transparent; border-top-color: #fff; border-bottom: 0; }
.cards { display: flex; gap: 187px; margin: 18px 0 0 100px; }
.card { width: 263px; height: 167px; background: #fff; border: 1px solid; border-radius: 4px; box-shadow: 4px 4px 3px rgba(0,0,0,.16); }
.card h2 { height: 38px; padding: 9px 15px; border-bottom: 1px solid; font-size: 14.600px; line-height: 19px; font-weight: 800; }
.card-body { height: 85px; padding: 10px 15px; font-size: 18.100px; line-height: 32px; font-weight: 800; }
.card .num { padding-left: 7px; letter-spacing: -.25px; }
.card footer { height: 42px; padding: 10px 15px; border-top: 1px solid; font-size: 14.400px; line-height: 22px; font-weight: 400; }
.card b { margin-left: 3px; font-size: 18px; font-weight: 800; letter-spacing: -.3px; }
.red { border-color: #dc3545; } .green { border-color: #198754; } .dark { border-color: #212529; }
.card h2, .card footer { border-color: inherit; color: #212529; }
.red .card-body { color: #dc3545; } .green .card-body { color: #198754; }
.links { display: flex; align-items: center; height: 40px; margin: 46px 0 0 396px; font-size: 22.300px; color: #000; }
.dot { width: 13px; height: 13px; border-radius: 50%; background: #000; }
.l1, .l2 { margin-left: 12px; white-space: nowrap; }
.l1 { width: 291px; }
.map { position: relative; height: 625px; margin-top: 15px; border-radius: 12px; overflow: hidden; background: #aad3df; }
.left .map { box-shadow: 0 0 14px rgba(0,0,0,.13); }
.world { width: 1363px; height: 625px; }
.land { fill: #f2efe9; }
.water { fill: #aad3df; }
.river { fill: none; stroke: #aad3df; stroke-width: 1; vector-effect: non-scaling-stroke; }
.border path { fill: none; stroke: #cbb2c8; stroke-width: 1.1; vector-effect: non-scaling-stroke; }
.label text { font: 13px "Noto Sans", "DejaVu Sans", sans-serif; fill: #806090; stroke: rgba(255,255,255,.7); stroke-width: 2.500px; paint-order: stroke; }
.label .sea { font-style: italic; font-size: 12px; fill: #6b94c4; }
.label .tif { font-family: "DejaVu Sans", sans-serif; }
.cases ellipse, .cases circle { fill: #cc1034; fill-opacity: .4; stroke: #cc1034; stroke-width: 3.7; }
.cases .z circle, .cases .z ellipse { stroke-width: 11; }
.zoomctl { position: absolute; left: 12px; top: 13px; width: 42px; height: 79px; background: #fff; border: 2px solid rgba(0,0,0,.25); border-radius: 4px; background-clip: padding-box; }
.zoomctl span { display: flex; align-items: center; justify-content: center; height: 37px; padding: 2px 0 0 2px; }
.zoomctl span + span { border-top: 1px solid #ccc; }
.zoomctl svg { width: 16px; height: 16px; stroke: #000; stroke-width: 2; }
.attrib { position: absolute; right: 0; bottom: 0; height: 20px; padding: 0 6px; background: rgba(255,255,255,.7); font: 14.200px/18px "Liberation Sans", Arial, sans-serif; color: #333; white-space: nowrap; }
.attrib a { color: #0078a8; }

/* right column */
.right { width: 500px; padding-top: 7px; }
.table-card { width: 500px; height: 500px; padding: 6px 7px; overflow: hidden; background: #fff; border-radius: 8px; box-shadow: 1px 2px 6px rgba(0,0,0,.2); }
table { width: 486px; table-layout: fixed; border-collapse: collapse; text-align: left; }
.c0 { width: 53px; } .c1 { width: 136px; } .c2 { width: 82px; } .c3 { width: 133px; } .c4 { width: 82px; }
thead { box-shadow: 0 1px 3px rgba(0,0,0,.22); }
thead th { height: 52px; padding: 0 0 0 7px; font-size: 20px; font-weight: 800; letter-spacing: .1px; }
thead th:first-child { padding-left: 10px; }
tbody th, tbody td { height: 50.500px; padding: 0 0 1px 10px; border-bottom: 1px solid #dee2e6; font-size: 16px; font-weight: 400; }
tbody th { padding: 0 0 6px 13px; font-size: 12.800px; font-weight: 800; }
tbody tr:nth-child(even) { background: #f5f6fa; }
.top td { font-weight: 800; }
.switch-row { display: flex; justify-content: center; align-items: center; gap: 9px; margin-top: 28px; height: 22px; font-size: 18.600px; font-weight: 400; }
.switch { width: 31px; height: 12px; border: 1px solid #bfbfbf; border-radius: 6px; background: #fff; position: relative; }
.switch::before { content: ""; position: absolute; left: 2px; top: 1px; width: 8px; height: 8px; border-radius: 50%; background: #bfbfbf; }
h3 { margin-top: 32px; font-size: 20px; line-height: 24px; font-weight: 800; }
.chart { width: 530px; height: 364px; margin: 4px 0 0 -8px; }
.grid0, .gridv, .line { fill: none; vector-effect: non-scaling-stroke; }
.grid0 { stroke: #b5b7bb; } .gridv { stroke: #dcdde1; }
.area { fill: #cc1034; fill-opacity: .5; }
.line { stroke: #cc1034; stroke-width: 4; stroke-linejoin: round; stroke-linecap: round; }
.ylab text { font: 15px "Liberation Sans", Arial, sans-serif; fill: #666; text-anchor: end; }
```
